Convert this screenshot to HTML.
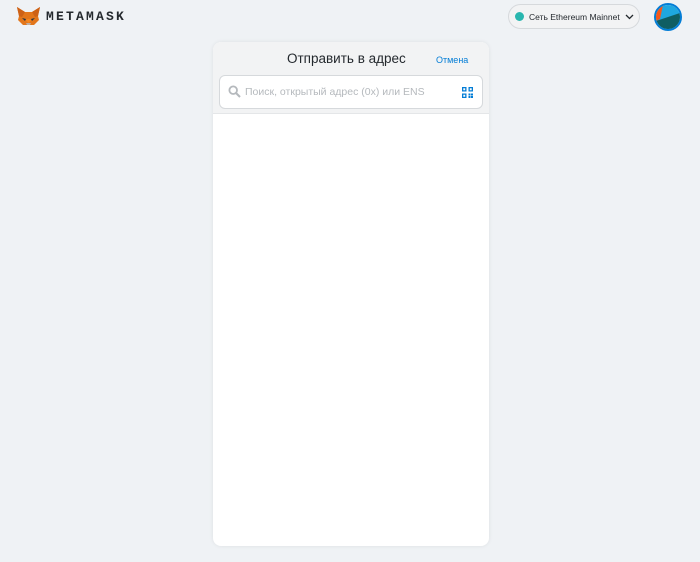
<!DOCTYPE html>
<html><head><meta charset="utf-8"><style>
*{margin:0;padding:0;box-sizing:border-box}
body{width:700px;height:562px;background:#eff2f5;font-family:"Liberation Sans","DejaVu Sans",sans-serif;position:relative;overflow:hidden}
.logo{position:absolute;left:17px;top:7px}
.brand{position:absolute;left:46px;top:9px;font-family:"Liberation Mono",monospace;font-size:13px;letter-spacing:2.2px;color:#24292e;font-weight:bold}
.net{position:absolute;left:508px;top:4px;width:132px;height:25px;border:1px solid #d6d9dc;border-radius:13px;background:#f2f3f4;font-size:8.5px;color:#24292e}
.net .dot{position:absolute;left:6px;top:7px;width:9px;height:9px;border-radius:50%;background:#29b6af}
.net span{position:absolute;left:20px;top:7px;white-space:nowrap}
.net svg{position:absolute;left:116px;top:9px}
.av{position:absolute;left:654px;top:3px;width:28px;height:28px;border-radius:50%;border:2px solid #037dd6;overflow:hidden;background:#fff}
.card{position:absolute;left:213px;top:42px;width:276px;height:504px;background:#fff;border-radius:8px;box-shadow:0 0 4px rgba(0,0,0,0.08);overflow:hidden}
.hd{height:72px;background:#f2f3f4;border-bottom:1px solid #e4e6e8;position:relative}
.title{position:absolute;left:74px;top:9px;font-size:13.5px;color:#24292e;white-space:nowrap}
.cancel{position:absolute;left:223px;top:13px;font-size:9px;color:#037dd6}
.search{position:absolute;left:6px;top:33px;width:264px;height:34px;background:#fff;border:1px solid #d6d9dc;border-radius:6px}
.search .ph{position:absolute;left:25px;top:10px;font-size:10.5px;color:#b5b9bd;white-space:nowrap}
.search .mg{position:absolute;left:8px;top:9px}
.search .qr{position:absolute;left:242px;top:11px}
</style></head><body>
<svg class="logo" width="23" height="19" viewBox="0 0 23 19">
<polygon points="0,0 8,5 15,5 23,0 21,9 22,13 17,18 6,18 1,13 2,9" fill="#e2761b"/>
<polygon points="0,0 8,5 5,10 2,9" fill="#cd6116"/>
<polygon points="23,0 15,5 18,10 21,9" fill="#cd6116"/>
<polygon points="8,13 11.5,16 15,13 12,12 11,12" fill="#f6851b"/>
<polygon points="9,16 14,16 13,18 10,18" fill="#c0ad9e"/>
<polygon points="5,11 9,12 8,14" fill="#233447"/>
<polygon points="18,11 14,12 15,14" fill="#233447"/>
</svg>
<div class="brand">METAMASK</div>
<div class="net"><div class="dot"></div><span>Сеть Ethereum Mainnet</span>
<svg width="9" height="6" viewBox="0 0 9 6"><path d="M1 1l3.5 3.5L8 1" stroke="#24292e" stroke-width="1.3" fill="none"/></svg></div>
<div class="av"><svg width="24" height="24" viewBox="0 0 24 24"><rect width="24" height="24" fill="#1ea7e0"/><polygon points="0,0 7,0 4,14 0,16" fill="#f2581c"/><polygon points="0,16 24,8 24,24 0,24" fill="#0f5e63"/></svg></div>
<div class="card">
<div class="hd">
<div class="title">Отправить в адрес</div>
<div class="cancel">Отмена</div>
<div class="search">
<svg class="mg" width="13" height="13" viewBox="0 0 13 13"><circle cx="5.2" cy="5.2" r="3.8" stroke="#b5b9bd" stroke-width="1.8" fill="none"/><path d="M8 8l4 4" stroke="#b5b9bd" stroke-width="2"/></svg>
<div class="ph">Поиск, открытый адрес (0x) или ENS</div>
<svg class="qr" width="11" height="11" viewBox="0 0 11 11" fill="#037dd6"><path d="M0 0h4.5v4.5H0zM1.3 1.3v1.9h1.9V1.3zM6.5 0H11v4.5H6.5zM7.8 1.3v1.9h1.9V1.3zM0 6.5h4.5V11H0zM1.3 7.8v1.9h1.9V7.8zM6.5 6.5h2v2h-2zM9 6.5h2v2H9zM6.5 9h2v2h-2zM9 9h2v2H9z"/></svg>
</div>
</div>
</div>
</body></html>
